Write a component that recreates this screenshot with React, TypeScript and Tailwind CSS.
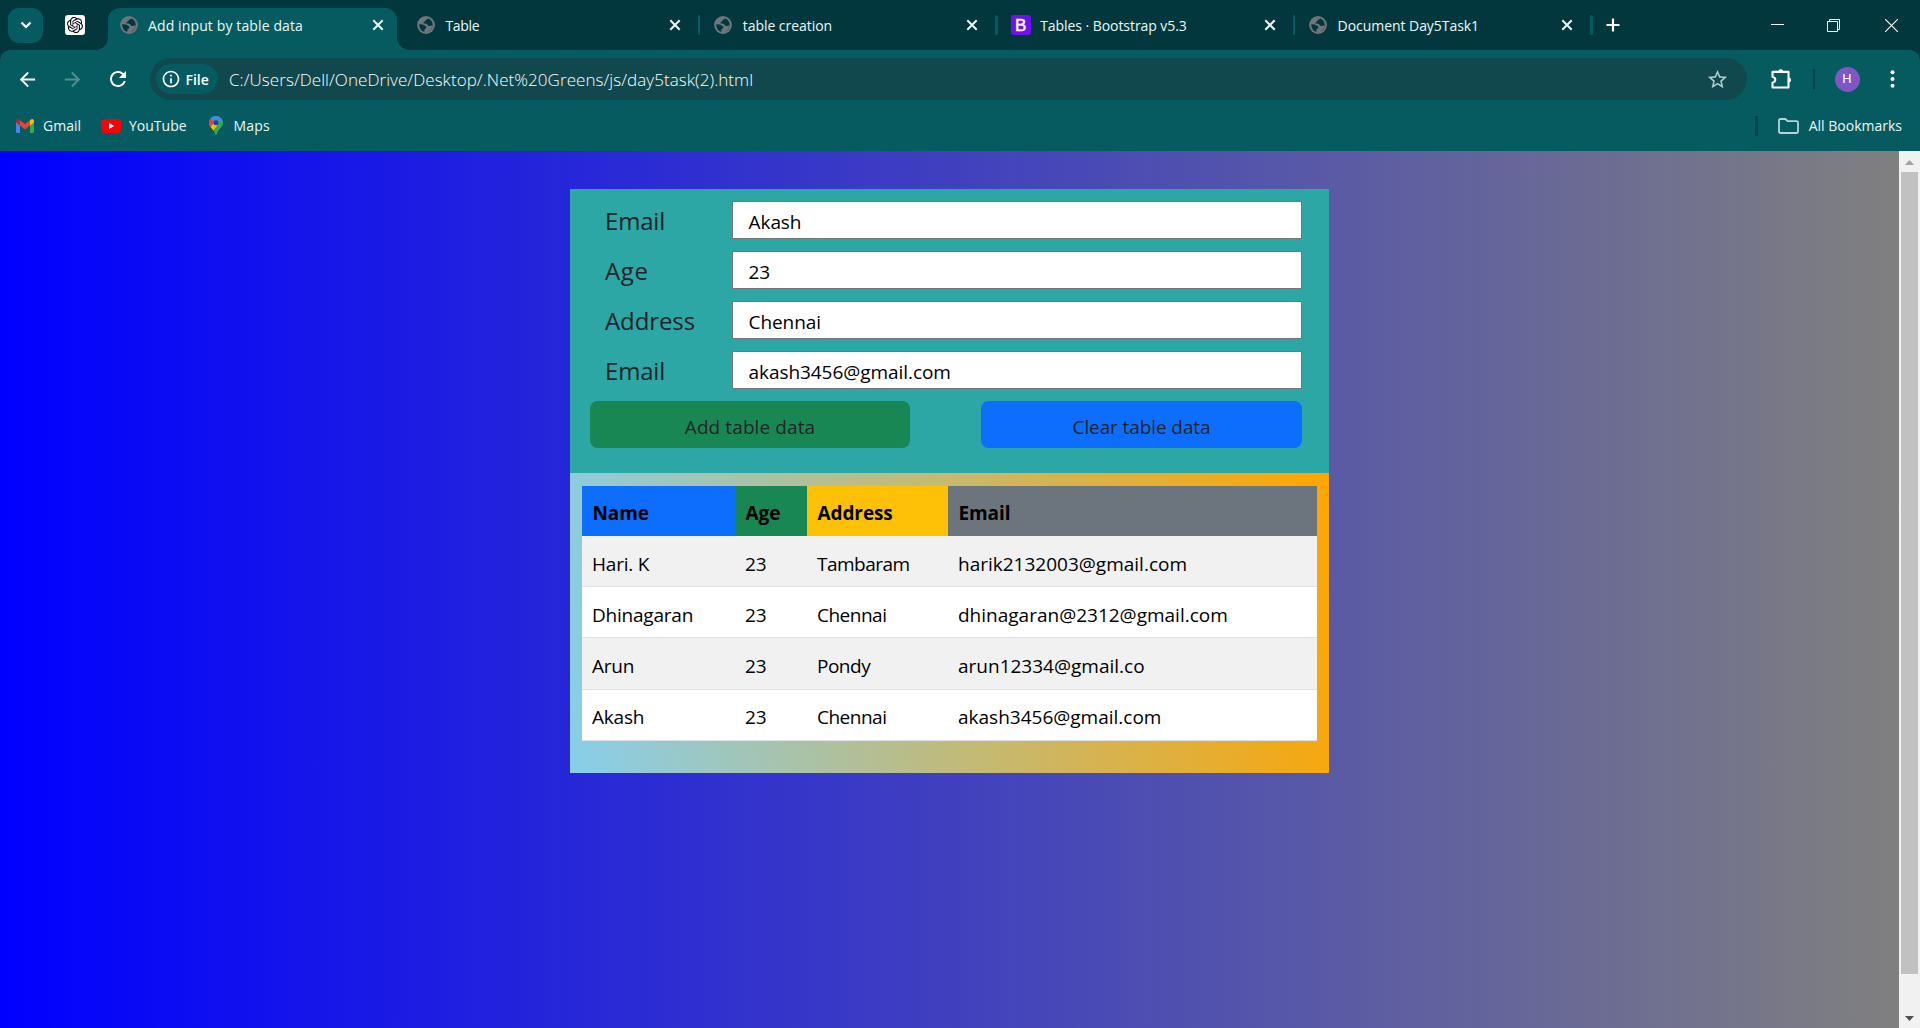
import React from "react";
import { SiOpenai } from "react-icons/si";
import { MdArrowBack, MdArrowForward, MdRefresh, MdInfoOutline, MdStarOutline } from "react-icons/md";

const uiFont = "font-['Open_Sans','Noto_Sans',sans-serif]";

function Globe() {
  return (
    <svg className="size-[18px] shrink-0" viewBox="0 0 18 18">
      <circle cx="9" cy="9" r="8.9" fill="#6e757b" />
      <path
        d="M2.3 8.2 C3.6 8.2 5.4 8 6.8 9 C7.8 9.8 9.6 9.9 9.4 11.4 C9.2 12.6 7.4 12.4 7.4 13.9 L7.4 15.7 C4.4 15.1 2.2 12.4 2.3 8.2 Z"
        fill="#02383d"
      />
      <path
        d="M11.3 2.6 C10.9 3.7 8.6 3.3 8.4 4.8 C8.3 6 6.3 5.6 6.4 6.9 C6.6 8 9 7.2 9.9 8 C10.9 8.9 11.2 10.1 12.3 10.1 C13.7 10.2 14.2 9.3 15.6 9.6 C15.4 12.6 13.4 14.9 10.8 15.6 C14 14.8 15.9 12.2 15.7 8.4 C15.4 5.6 13.8 3.5 11.3 2.6 Z"
        fill="#02383d"
      />
    </svg>
  );
}

function BootstrapIcon() {
  return (
    <span className="-ml-px flex size-5 shrink-0 items-center justify-center rounded-[3px] bg-[#7010ee] font-['Liberation_Sans',sans-serif] text-[17px] leading-none text-white [-webkit-text-stroke:0.5px_white]">
      B
    </span>
  );
}

function TabClose() {
  return (
    <svg className="size-3 shrink-0" viewBox="0 0 12 12" fill="none" stroke="#eaf6f6" strokeWidth="2">
      <path d="M1.3 1.3 L10.7 10.7 M10.7 1.3 L1.3 10.7" />
    </svg>
  );
}

type TabProps = { title: string; tracking: string; active?: boolean; bootstrap?: boolean; divider?: boolean };

function Tab({ title, tracking, active, bootstrap, divider }: TabProps) {
  return (
    <div className="relative flex h-[50px] w-[297.4px] shrink-0 items-center pl-[11.5px]">
      {active && (
        <>
          <span className="absolute top-2 left-0 h-[42px] w-[289px] rounded-t-[12px] bg-[#055b60]" />
          <span className="absolute bottom-0 -left-3 size-3 bg-[radial-gradient(circle_at_0_0,#02383d_11.5px,#055b60_12px)]" />
          <span className="absolute bottom-0 left-[289px] size-3 bg-[radial-gradient(circle_at_100%_0,#02383d_11.5px,#055b60_12px)]" />
        </>
      )}
      <div className="relative flex w-full items-center">
        {bootstrap ? <BootstrapIcon /> : <Globe />}
        <span
          className={`w-[223.5px] text-[14px] whitespace-nowrap text-[#eaf8f8] ${tracking} ${bootstrap ? "ml-[9.5px]" : "ml-[10.5px]"}`}
        >
          {title}
        </span>
        <TabClose />
        {divider && <span className="ml-[17px] h-5 w-[2.5px] rounded-full bg-[#055b60]" />}
      </div>
    </div>
  );
}

function TitleBar() {
  return (
    <div className="flex h-[50px] items-center bg-[#02383d]">
      <div className="ml-2 flex size-[35px] items-center justify-center rounded-[11px] bg-[#055b60]">
        <svg className="size-3" viewBox="0 0 12 12" fill="none" stroke="#fff" strokeWidth="2.2">
          <path d="M1.5 3.5 L6 8 L10.5 3.5" />
        </svg>
      </div>
      <div className="mr-[23px] ml-[22px] flex size-5 items-center justify-center rounded-[3px] bg-white">
        <SiOpenai className="size-4 text-black" />
      </div>
      <Tab title="Add input by table data" tracking="tracking-[0.12px]" active />
      <Tab title="Table" tracking="tracking-[-0.3px]" divider />
      <Tab title="table creation" tracking="tracking-[-0.05px]" divider />
      <Tab title="Tables · Bootstrap v5.3" tracking="tracking-[-0.06px]" bootstrap divider />
      <Tab title="Document Day5Task1" tracking="tracking-[-0.05px]" divider />
      <svg className="ml-[11px] size-[14px]" viewBox="0 0 14 14" stroke="#fff" strokeWidth="2.2">
        <path d="M7 0.5 V13.5 M0.5 7 H13.5" />
      </svg>
      <div className="mr-[22px] ml-auto flex items-center">
        <svg className="h-[14px] w-[13px]" viewBox="0 0 13 14" stroke="#fff">
          <path d="M0 6.5 H13" />
        </svg>
        <svg className="ml-[43px] size-[13px]" viewBox="0 0 13 13" fill="none" stroke="#fff">
          <path d="M0.5 2.5 H10.5 V12.5 H0.5 Z M2.5 2.5 V0.5 H12.5 V10.5 H10.5" />
        </svg>
        <svg className="ml-[45px] size-[13px]" viewBox="0 0 13 13" stroke="#fff" strokeWidth="1.1">
          <path d="M0 0 L13 13 M13 0 L0 13" />
        </svg>
      </div>
    </div>
  );
}

function Toolbar() {
  return (
    <div className="flex h-[58px] items-center rounded-t-[10px] bg-[#055b60] text-white">
      <MdArrowBack className="ml-4 size-[23px]" />
      <MdArrowForward className="ml-[22px] size-[23px] text-[#4f9093]" />
      <MdRefresh className="ml-[21.5px] size-[24px]" />
      <div className="ml-[20px] flex h-[42px] w-[1597px] items-center rounded-full bg-[#10484e]">
        <div className="ml-[6px] flex h-[30px] w-[62px] items-center rounded-full bg-[#055b60] pl-[5px]">
          <MdInfoOutline className="size-5" />
          <span className="ml-[5px] text-[14px] font-semibold tracking-normal">File</span>
        </div>
        <span className="ml-[11.5px] pt-px text-[17px] font-light tracking-[0.06px] whitespace-nowrap text-white">
          C:/Users/Dell/OneDrive/Desktop/.Net%20Greens/js/day5task(2).html
        </span>
        <MdStarOutline className="mr-[18px] ml-auto size-[23px] text-[#b5cdd0]" />
      </div>
      <svg className="ml-[23px] size-[23px]" viewBox="0 0 23 23" fill="none" stroke="#fff" strokeWidth="2.1">
        <path d="M2.5 3.9 H18.5 V19.5 H2.5 V14.8 C4.4 14.2 5.3 13.2 5.3 11.8 C5.3 10.4 4.4 9.4 2.5 8.8 Z" strokeLinejoin="round" />
        <path d="M8 3.4 A2.8 2.8 0 0 1 13.4 3.4 Z M19 9.2 A2.8 2.8 0 0 1 19 14.6 Z" fill="#fff" stroke="none" />
      </svg>
      <span className="ml-[20px] h-5 w-[2px] bg-[#02434a]" />
      <span className="ml-[20px] flex size-[25px] items-center justify-center rounded-full bg-[#7e57c2] font-[Roboto,sans-serif] text-[13px]">
        H
      </span>
      <svg className="ml-[30px] h-[18px] w-[5px]" viewBox="0 0 5 18" fill="#fff">
        <circle cx="2.5" cy="2.2" r="2" />
        <circle cx="2.5" cy="9" r="2" />
        <circle cx="2.5" cy="15.8" r="2" />
      </svg>
    </div>
  );
}

function BookmarksBar() {
  return (
    <div className="flex h-[43px] items-start bg-[#055b60] text-[14px] text-[#eaf8f8]">
      <div className="flex h-[35px] w-full items-center">
        <svg className="ml-4 h-[14px] w-[18px]" viewBox="0 0 18 14">
          <path d="M0 2 V12.8 A1.2 1.2 0 0 0 1.2 14 H4 V5 Z" fill="#4285f4" />
          <path d="M18 2 V12.8 A1.2 1.2 0 0 1 16.8 14 H14 V5 Z" fill="#34a853" />
          <path d="M4 1.2 L9 5 L14 1.2 V6.6 L9 10.4 L4 6.6 Z" fill="#ea4335" />
          <path d="M0 1.9 A1.9 1.9 0 0 1 3 0.4 L4 1.2 V6.6 L0 3.6 Z" fill="#c5221f" />
          <path d="M18 1.9 A1.9 1.9 0 0 0 15 0.4 L14 1.2 V6.6 L18 3.6 Z" fill="#fbbc04" />
        </svg>
        <span className="ml-[9px]">Gmail</span>
        <svg className="ml-[20px] h-[14px] w-5" viewBox="0 0 20 14">
          <rect width="20" height="14" rx="3.5" fill="#f00" />
          <path d="M8 4 L13.2 7 L8 10 Z" fill="#fff" />
        </svg>
        <span className="ml-[8px]">YouTube</span>
        <svg className="ml-[22px] h-[19px] w-[14px]" viewBox="0 0 14 19">
          <clipPath id="pin">
            <path d="M7 0 A7 7 0 0 1 14 7 C14 11 9 13 7.8 18.2 Q7 19.6 6.2 18.2 C5 13 0 11 0 7 A7 7 0 0 1 7 0 Z" />
          </clipPath>
          <g clipPath="url(#pin)">
            <rect width="14" height="19" fill="#34a853" />
            <path d="M0 12.5 L14 -2 V-4 H-4 V12 Z" fill="#4285f4" />
            <path d="M-1 1 L7 7 L0 13 Z" fill="#ea4335" />
            <path d="M0 13 L4.5 7.5 L9 8.5 L3 16 Z" fill="#fbbc04" />
            <path d="M7 7 L12.5 1 L15 5 Z" fill="#4285f4" />
          </g>
          <circle cx="7" cy="6.8" r="2.5" fill="#174a8c" />
        </svg>
        <span className="ml-[11px] tracking-[0.2px]">Maps</span>
        <span className="ml-auto h-5 w-[2.5px] bg-[#02434a]" />
        <svg className="ml-[20px] h-4 w-[21px]" viewBox="0 0 21 16" fill="none" stroke="#b5d3dc" strokeWidth="1.8">
          <path d="M1 13.6 V2.4 Q1 1 2.4 1 H7.4 L9.6 3.2 H18.6 Q20 3.2 20 4.6 V13.6 Q20 15 18.6 15 H2.4 Q1 15 1 13.6 Z" />
        </svg>
        <span className="mr-[18px] ml-[10px]">All Bookmarks</span>
      </div>
    </div>
  );
}

function Field({ label, value, tracking }: { label: string; value: string; tracking: string }) {
  return (
    <div className="flex h-[38px] items-center">
      <label className={`ml-[15px] w-[127px] pt-[2px] text-[24px] leading-none text-[#212529] ${tracking}`}>{label}</label>
      <div className="flex h-[38px] w-[570px] items-center border border-[#767676] bg-white pt-[4px] pl-[15.5px] text-[19px] tracking-[-0.06px] text-black">
        {value}
      </div>
    </div>
  );
}

const rows = [
  ["Hari. K", "23", "Tambaram", "harik2132003@gmail.com"],
  ["Dhinagaran", "23", "Chennai", "dhinagaran@2312@gmail.com"],
  ["Arun", "23", "Pondy", "arun12334@gmail.co"],
  ["Akash", "23", "Chennai", "akash3456@gmail.com"],
];

const cellTracking = ["tracking-[-0.22px]", "tracking-[-0.1px]", "tracking-[-0.5px]", "tracking-normal"];

function DataTable() {
  return (
    <div className="text-[19px] leading-[30px] text-black">
      <div className="grid h-[50px] grid-cols-[153px_72px_141px_1fr] font-bold tracking-[-0.1px] *:pt-[12px] *:pl-[10.5px]">
        <div className="bg-[#0d6efd]">Name</div>
        <div className="bg-[#198754]">Age</div>
        <div className="bg-[#ffc107]">Address</div>
        <div className="bg-[#6c757d]">Email</div>
      </div>
      {rows.map((row) => (
        <div
          key={row[3]}
          className="grid h-[51.2px] grid-cols-[153px_72px_141px_1fr] border-b border-[#dee2e6] bg-white *:pt-[12.6px] *:pl-[10px] even:bg-[#f1f1f1]"
        >
          {row.map((cell, i) => (
            <div key={i} className={cellTracking[i]}>
              {cell}
            </div>
          ))}
        </div>
      ))}
    </div>
  );
}

function Page() {
  return (
    <div className="flex min-h-0 flex-1">
      <main className="flex-1 bg-[linear-gradient(90deg,#0000ff,#808080)] pt-[38px]">
        <div className="ml-[570px] w-[759px]">
          <section className="h-[284px] bg-[#2da6a6] px-5 pt-3">
            <div className="flex flex-col gap-3">
              <Field label="Email" value="Akash" tracking="tracking-[-0.2px]" />
              <Field label="Age" value="23" tracking="tracking-[0.6px]" />
              <Field label="Address" value="Chennai" tracking="tracking-[-0.1px]" />
              <Field label="Email" value="akash3456@gmail.com" tracking="tracking-[-0.2px]" />
            </div>
            <div className="mt-3 flex w-[712px] justify-between text-[19px] text-[#212529]">
              <button className="h-[47px] w-[320px] rounded-[7.5px] bg-[#198754] pt-[5px] tracking-[0.1px]">Add table data</button>
              <button className="h-[47px] w-[321px] rounded-[7.5px] bg-[#0d6efd] pt-[5px] tracking-[-0.1px]">Clear table data</button>
            </div>
          </section>
          <section className="h-[300px] bg-[linear-gradient(80deg,#87ceeb,#ffa500)] px-3 pt-[13px]">
            <DataTable />
          </section>
        </div>
      </main>
      <div className="flex w-[21px] flex-col items-center bg-[#f1f1f1]">
        <svg className="h-[21px] w-[9px]" viewBox="0 0 9 21" fill="#a3a3a3">
          <path d="M0 14 L4.5 9 L9 14 Z" />
        </svg>
        <div className="h-[802px] w-[17px] bg-[#c1c1c1]" />
        <svg className="mt-auto h-[21px] w-[9px]" viewBox="0 0 9 21" fill="#505050">
          <path d="M0 9 L4.5 14 L9 9 Z" />
        </svg>
      </div>
    </div>
  );
}

export default function App() {
  return (
    <div className={`flex h-[1028px] w-[1920px] flex-col overflow-hidden bg-[#02383d] ${uiFont}`}>
      <TitleBar />
      <Toolbar />
      <BookmarksBar />
      <Page />
    </div>
  );
}
